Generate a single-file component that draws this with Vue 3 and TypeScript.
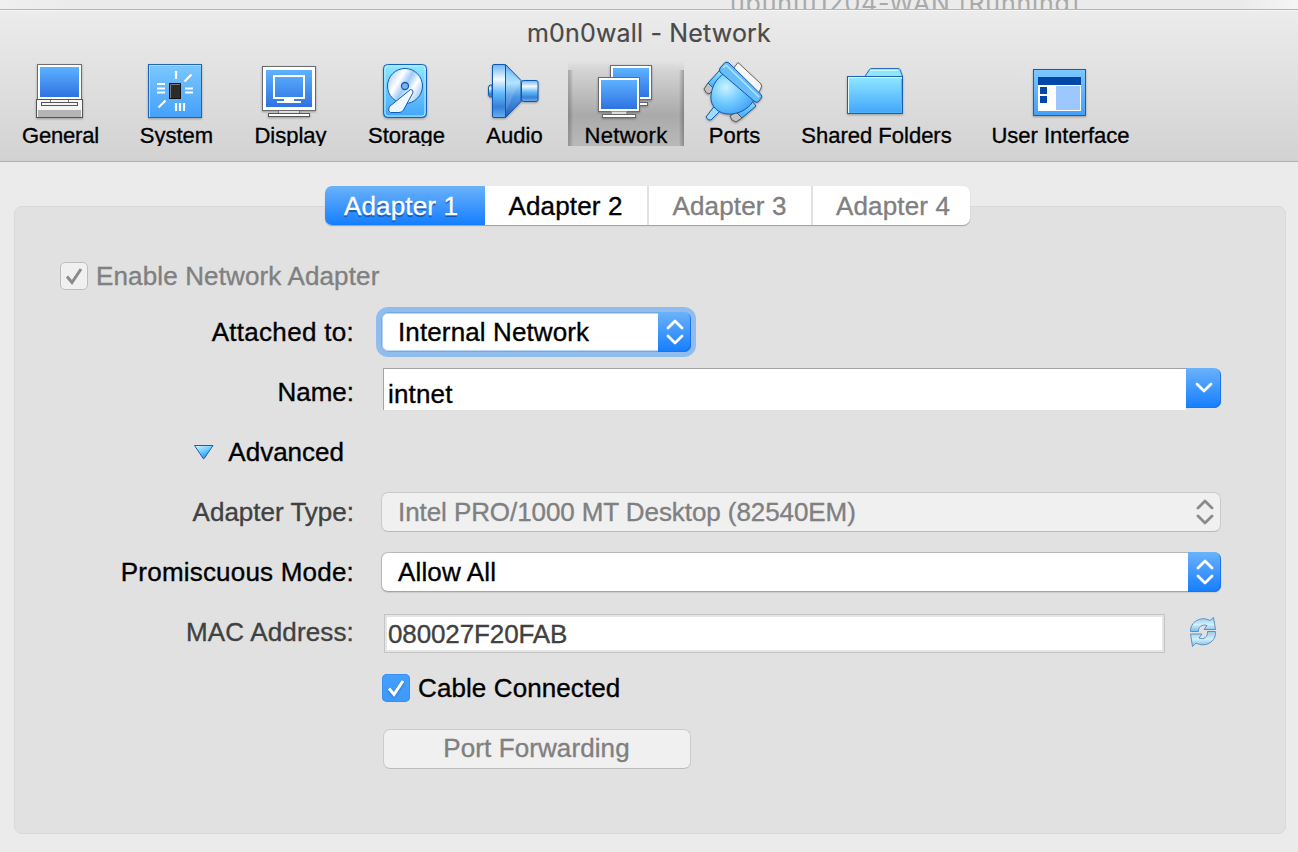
<script setup lang="ts">
import { ref } from 'vue'

interface Tool {
  id: string
  label: string
}

interface AdapterTab {
  label: string
  enabled: boolean
}

const tools: Tool[] = [
  { id: 'general', label: 'General' },
  { id: 'system', label: 'System' },
  { id: 'display', label: 'Display' },
  { id: 'storage', label: 'Storage' },
  { id: 'audio', label: 'Audio' },
  { id: 'network', label: 'Network' },
  { id: 'ports', label: 'Ports' },
  { id: 'shared', label: 'Shared Folders' },
  { id: 'ui', label: 'User Interface' },
]

const tabs: AdapterTab[] = [
  { label: 'Adapter 1', enabled: true },
  { label: 'Adapter 2', enabled: true },
  { label: 'Adapter 3', enabled: false },
  { label: 'Adapter 4', enabled: false },
]

const activeTool = ref('network')
const activeTab = ref(0)
</script>

<template>
  <div class="window">
    <div class="backdrop"><span class="behind">ubuntu1204-WAN [Running]</span></div>

    <header class="header">
      <h1 class="title">m0n0wall - Network</h1>
      <nav class="toolbar">
        <div
          v-for="tool in tools"
          :key="tool.id"
          class="tool"
          :class="[tool.id, { selected: tool.id === activeTool }]"
          @click="activeTool = tool.id"
        >
          <svg class="icon" width="64" height="64" viewBox="0 0 64 64">
            <defs>
              <linearGradient :id="tool.id + '-screen'" x1="0" y1="0" x2="0" y2="1">
                <stop offset="0" stop-color="#5db2ff" />
                <stop offset="1" stop-color="#2f72e2" />
              </linearGradient>
              <linearGradient :id="tool.id + '-tile'" x1="0" y1="0" x2="0" y2="1">
                <stop offset="0" stop-color="#7cc8ff" />
                <stop offset="1" stop-color="#43a0fb" />
              </linearGradient>
              <linearGradient :id="tool.id + '-cyan'" x1="0" y1="0" x2="0" y2="1">
                <stop offset="0" stop-color="#90e8ff" />
                <stop offset="1" stop-color="#41a5fb" />
              </linearGradient>
              <linearGradient :id="tool.id + '-metal'" x1="0" y1="0" x2="0" y2="1">
                <stop offset="0" stop-color="#6db4f4" />
                <stop offset="0.28" stop-color="#f0faff" />
                <stop offset="0.55" stop-color="#62b8fa" />
                <stop offset="0.8" stop-color="#3580da" />
                <stop offset="1" stop-color="#67aef0" />
              </linearGradient>
              <linearGradient :id="tool.id + '-cone'" x1="0" y1="0" x2="0" y2="1">
                <stop offset="0" stop-color="#5bb0f8" />
                <stop offset="0.35" stop-color="#a9e0ff" />
                <stop offset="0.6" stop-color="#4a98e6" />
                <stop offset="1" stop-color="#265fb6" />
              </linearGradient>
              <radialGradient :id="tool.id + '-ball'" cx="0.35" cy="0.35" r="0.75">
                <stop offset="0" stop-color="#c9f3ff" />
                <stop offset="0.5" stop-color="#72cbff" />
                <stop offset="1" stop-color="#3f9df6" />
              </radialGradient>
              <linearGradient :id="tool.id + '-disc'" x1="0" y1="0.2" x2="1" y2="0.8">
                <stop offset="0" stop-color="#a9cdf5" />
                <stop offset="0.3" stop-color="#ffffff" />
                <stop offset="0.5" stop-color="#9fcaf8" />
                <stop offset="0.7" stop-color="#ffffff" />
                <stop offset="1" stop-color="#8fbcf0" />
              </linearGradient>
            </defs>

            <g v-if="tool.id === 'general'">
              <rect x="9.5" y="4.5" width="44" height="35" fill="#fff" stroke="#6e6e6e" />
              <rect x="12" y="7" width="39" height="30" :fill="`url(#${tool.id}-screen)`" />
              <rect x="8.5" y="39.5" width="46" height="18" fill="#f5f5f5" stroke="#555" />
              <rect x="10" y="50" width="43" height="7" fill="#b4b4b4" />
              <path d="M22.5 40v2.5M40.5 40v2.5" stroke="#777" />
              <rect x="13.5" y="42.5" width="36" height="3" fill="#f4f4f4" stroke="#555" />
            </g>

            <g v-else-if="tool.id === 'system'">
              <rect x="5.5" y="4.5" width="53" height="53" :fill="`url(#${tool.id}-tile)`" stroke="#1d66bb" />
              <path d="M6.5 57V5.5H58" fill="none" stroke="#a8dcff" />
              <path
                d="M33 11v8M41.5 21.5l7-7M14 24h8M14 28.5h8M14 32.5h8M42 28.5h8M42 32.5h8M15.5 47.5l7-7M33 43v8M37 43v8M41 43v8"
                fill="none" stroke="#fff" stroke-width="2.2"
              />
              <rect x="26.5" y="23.5" width="11" height="15" fill="#2b2b2b" stroke="#111" />
              <path d="M27.5 38V24.5H37" fill="none" stroke="#777" />
            </g>

            <g v-else-if="tool.id === 'display'">
              <rect x="5.5" y="6.5" width="53" height="44" fill="#fff" stroke="#6b6b6b" />
              <rect x="9" y="10" width="46" height="37" :fill="`url(#${tool.id}-screen)`" />
              <rect x="17" y="16" width="30" height="22" fill="none" stroke="#fff" stroke-width="2" />
              <path d="M27 38h10v3h7v2H20v-2h7z" fill="#fff" />
              <path d="M21.5 51v3h21v-3" fill="#ddd" stroke="#777" />
              <rect x="11.5" y="53.5" width="41" height="3" fill="#fff" stroke="#555" />
            </g>

            <g v-else-if="tool.id === 'storage'">
              <rect x="10.5" y="4.5" width="43" height="53" rx="4" :fill="`url(#${tool.id}-cyan)`" stroke="#1463bd" />
              <rect x="12" y="6" width="40" height="50" rx="3" fill="none" stroke="#b9efff" />
              <circle cx="32" cy="26" r="17.5" :fill="`url(#${tool.id}-disc)`" stroke="#135cb4" />
              <circle cx="32" cy="26" r="3.5" fill="#7cb4ea" stroke="#135cb4" stroke-width="1.3" />
              <path d="M37.5 29.5Q40.5 29.5 40 32.5L30.5 50Q29 52.5 26 52.5H17.5Q14.5 51 16.5 46.5Z" fill="#edf7ff" stroke="#135cb4" />
            </g>

            <g v-else-if="tool.id === 'audio'">
              <path d="M11 25h-1.5q-2 0-2 3v6q0 3 2 3H11z" :fill="`url(#${tool.id}-metal)`" stroke="#1657a6" />
              <path d="M24.5 4.5L40 20.5V41.5L24.5 57.5z" :fill="`url(#${tool.id}-cone)`" stroke="#174f9c" />
              <path d="M24.5 10v42L39 21z" fill="#fff" opacity="0.12" />
              <rect x="11.5" y="4.5" width="13" height="53" rx="1.5" :fill="`url(#${tool.id}-metal)`" stroke="#0f56ae" />
              <rect x="40.5" y="20.5" width="16.5" height="21" rx="2" :fill="`url(#${tool.id}-metal)`" stroke="#0f56ae" />
            </g>

            <g v-else-if="tool.id === 'network'">
              <rect x="16.5" y="5.5" width="41" height="34" fill="#fff" stroke="#6b6b6b" />
              <rect x="19" y="8" width="36" height="29" :fill="`url(#${tool.id}-screen)`" />
              <rect x="40.5" y="42.5" width="13" height="3" fill="#fff" stroke="#666" />
              <rect x="4.5" y="17.5" width="41" height="34" fill="#fff" stroke="#6b6b6b" />
              <rect x="7" y="20" width="36" height="29" :fill="`url(#${tool.id}-screen)`" />
              <rect x="17.5" y="51.5" width="15" height="3.5" fill="#ddd" stroke="#999" />
              <rect x="8.5" y="54.5" width="33" height="3" fill="#fff" stroke="#666" />
            </g>

            <g v-else-if="tool.id === 'ports'" stroke-linejoin="round">
              <path d="M31 9L36 2.5L59 24Q60 26 59 28L56 34z" fill="#f7f7f7" stroke="#666" />
              <path d="M18 10L23 16L12 29L6 23z" :fill="`url(#${tool.id}-cyan)`" stroke="#1457ab" />
              <path d="M6 23L12 29L7 34Q4 34 2 29z" fill="#c2c2c2" stroke="#555" />
              <path d="M49 40L54 46L40 58L34 52z" :fill="`url(#${tool.id}-cyan)`" stroke="#1457ab" />
              <path d="M34 52L40 58L34 62Q29 61 28 56z" fill="#c2c2c2" stroke="#555" />
              <path d="M12.5 46L18 51L9 60Q6 61 4 57z" fill="#9edcff" stroke="#1457ab" />
              <path d="M23 13C14 18 8 29 9 40C11 50 20 55 30 54C40 53 48 47 52 40z" :fill="`url(#${tool.id}-ball)`" stroke="#1457ab" />
              <path d="M18 8L23 2.5Q25 1.5 27 3L59 34.5Q60.5 36.5 59 38.5L56 42Q54 43 52 41L18 12Q17 10 18 8z" fill="#68bcf7" stroke="#0f56ae" />
              <path d="M21 8L24 5L57 37" fill="none" stroke="#b2e6ff" stroke-width="1.5" />
            </g>

            <g v-else-if="tool.id === 'shared'">
              <path d="M22 16.5L26.5 9.5Q27.5 8.5 29 8.500H55Q56.500 8.500 57 9.500L59.500 16.500" fill="#8de5ff" stroke="#2272bf" />
              <path d="M27 10.500H55" stroke="#cff8ff" />
              <rect x="4.500" y="16.500" width="55" height="37" :fill="`url(#${tool.id}-cyan)`" stroke="#1b60b2" />
              <path d="M5.500 53V17.500H59" fill="none" stroke="#e0fbff" />
              <path d="M6.500 52.500H58.500V19" fill="none" stroke="#4fb2f8" />
            </g>

            <g v-else>
              <rect x="6.500" y="9.500" width="52" height="46" :fill="`url(#${tool.id}-tile)`" stroke="#175fb8" />
              <rect x="11" y="17" width="43" height="8" fill="#0147a8" />
              <rect x="11" y="25" width="43" height="26" fill="#fff" />
              <rect x="13" y="27" width="7" height="7" fill="#0147a8" />
              <rect x="13" y="36" width="7" height="7" fill="#0147a8" />
              <rect x="29" y="26" width="24" height="24" fill="#9cc8ff" />
            </g>
          </svg>
          <span class="tool-label">{{ tool.label }}</span>
        </div>
      </nav>
    </header>

    <main class="panel">
      <div class="tabs">
        <div
          v-for="(tab, i) in tabs"
          :key="tab.label"
          class="tab"
          :class="{ active: i === activeTab, disabled: !tab.enabled }"
          @click="tab.enabled && (activeTab = i)"
        >{{ tab.label }}</div>
      </div>

      <div class="enable">
        <span class="check off">
          <svg width="28" height="28" viewBox="0 0 28 28"><path d="M7 14.5L12 20.5L21 7" fill="none" stroke="#8b8b8b" stroke-width="3" /></svg>
        </span>
        <span class="enable-text">Enable Network Adapter</span>
      </div>

      <div class="form">
        <label class="label attached">Attached to:</label>
        <div class="field">
          <div class="select focused">
            <span class="value">Internal Network</span>
            <span class="stepper">
              <svg width="18" height="28" viewBox="0 0 18 28"><path d="M2 10L9 3L16 10M2 18L9 25L16 18" /></svg>
            </span>
          </div>
        </div>

        <label class="label">Name:</label>
        <div class="field">
          <div class="combo">
            <span class="combo-text">intnet</span>
            <span class="combo-arrow">
              <svg width="18" height="12" viewBox="0 0 18 12"><path d="M2 2L9 9L16 2" /></svg>
            </span>
          </div>
        </div>

        <div class="label advanced">
          <svg width="22" height="18" viewBox="0 0 22 18">
            <defs>
              <linearGradient id="tri" x1="0" y1="0" x2="0.6" y2="1">
                <stop offset="0" stop-color="#d6f7ff" />
                <stop offset="0.5" stop-color="#72cffd" />
                <stop offset="1" stop-color="#2a8be8" />
              </linearGradient>
            </defs>
            <path d="M1.5 2.5H20L11.2 15.5Q10.700 16 10.200 15.500z" fill="url(#tri)" stroke="#1961ae" stroke-linejoin="round" />
          </svg>
          <span>Advanced</span>
        </div>
        <div class="field"></div>

        <label class="label muted">Adapter Type:</label>
        <div class="field">
          <div class="select disabled">
            <span class="value intel">Intel PRO/1000 MT Desktop (82540EM)</span>
            <span class="stepper">
              <svg width="18" height="28" viewBox="0 0 18 28"><path d="M2 10L9 3L16 10M2 18L9 25L16 18" /></svg>
            </span>
          </div>
        </div>

        <label class="label promiscuous">Promiscuous Mode:</label>
        <div class="field">
          <div class="select">
            <span class="value allow">Allow All</span>
            <span class="stepper">
              <svg width="18" height="28" viewBox="0 0 18 28"><path d="M2 10L9 3L16 10M2 18L9 25L16 18" /></svg>
            </span>
          </div>
        </div>

        <label class="label muted mac-label">MAC Address:</label>
        <div class="field mac-row">
          <div class="mac">080027F20FAB</div>
          <svg class="refresh" width="30" height="32" viewBox="0 0 30 32">
            <defs>
              <linearGradient id="arrow" x1="0" y1="0" x2="0" y2="1">
                <stop offset="0" stop-color="#96c8ea" />
                <stop offset="0.5" stop-color="#d2f0f8" />
                <stop offset="1" stop-color="#76bbe8" />
              </linearGradient>
            </defs>
            <g fill="url(#arrow)" stroke="#5f8fc2" stroke-linejoin="round">
              <path d="M2.5 15.500C2 6 13 -0.500 22 4.500L25.500 1.500L27.500 13.500H16L19 9.500C14 8 10 11 10.500 15.500z" />
              <path d="M27.500 15.500C28.500 26 17 32 8 27L4.500 30.500L2.500 18H14L11 22C16 24 20 21 19.500 15.500z" />
            </g>
          </svg>
        </div>
      </div>

      <div class="cable">
        <span class="check on">
          <svg width="28" height="28" viewBox="0 0 28 28"><path d="M7 14.5L12 20.5L21 7" fill="none" stroke="#fff" stroke-width="3" /></svg>
        </span>
        <span class="cable-text">Cable Connected</span>
      </div>

      <div class="forward">Port Forwarding</div>
    </main>
  </div>
</template>

<style>
body {
  background: #ebebeb;
  overflow: hidden;
}
</style>

<style scoped>
.window {
  width: 1298px;
  height: 852px;
  overflow: hidden;
  box-sizing: border-box;
  background: #ebebeb;
  color: #000;
  font-family: "Liberation Sans", Arial, sans-serif;
  font-size: 26px;
  line-height: 30px;
  white-space: nowrap;
  -webkit-text-stroke: 0.35px currentColor;
}

.backdrop {
  height: 9px;
  overflow: hidden;
  background: linear-gradient(90deg, #f0f0f0 0, #ebebeb 70px, #ebebeb 1240px, #f5f5f5 1298px);
}

.behind {
  display: block;
  margin: -12px 0 0 730px;
  font-family: Inter, sans-serif;
  font-size: 25px;
  letter-spacing: 0.8px;
  color: #a9a9a9;
  -webkit-text-stroke: 0;
}

.header {
  height: 153px;
  box-sizing: border-box;
  border-top: 1px solid #b4b4b4;
  border-bottom: 1px solid #afafaf;
  background: linear-gradient(#ececec, #d2d2d2);
  box-shadow: inset 0 1px #f6f6f6;
}

.title {
  margin: 0;
  padding-top: 8px;
  height: 44px;
  font-family: Inter, sans-serif;
  font-size: 25px;
  font-weight: 400;
  line-height: 30px;
  letter-spacing: 0.17px;
  text-align: center;
  color: #4a4a4a;
  -webkit-text-stroke: 0.2px currentColor;
}

.toolbar {
  display: flex;
  margin-top: -2px;
  padding-left: 3px;
}

.tool {
  height: 86px;
  overflow: hidden;
  display: flex;
  flex-direction: column;
  align-items: center;
  flex: none;
}

.general { width: 114px; }
.system { width: 116px; }
.display { width: 112px; }
.storage { width: 120px; }
.audio { width: 96px; margin-right: 7px; }
.network { width: 116px; }
.ports { width: 100px; }
.shared { width: 182px; }
.ui { width: 186px; }

.tool.selected {
  background:
    linear-gradient(90deg, rgba(0, 0, 0, 0.2) 0, rgba(0, 0, 0, 0.12) 3px, transparent 5px, transparent 111px, rgba(0, 0, 0, 0.12) 113px, rgba(0, 0, 0, 0.25) 116px) 0 10px / 100% 76px no-repeat,
    linear-gradient(transparent 1px, #d4d4d4 10px, #aaa 55px, #b9b9b9 86px);
}

.icon {
  flex: none;
  filter: drop-shadow(0 1px 1px rgba(0, 0, 0, 0.3));
}

.tool-label {
  padding: 1px 0 0 3px;
  font-size: 22px;
  line-height: 21px;
  text-shadow: 0 1px rgba(255, 255, 255, 0.35);
}

.general .tool-label {
  padding-left: 1px;
  letter-spacing: -0.2px;
}

.network .tool-label {
  padding-left: 0;
  letter-spacing: 0.35px;
}

.ports .tool-label {
  padding-left: 1px;
}

.panel {
  width: 1272px;
  height: 628px;
  box-sizing: border-box;
  margin: 44px 0 0 14px;
  border: 1px solid #d9d9d9;
  border-radius: 8px;
  background: #e1e1e1;
}

.tabs {
  display: flex;
  width: 645px;
  height: 39px;
  margin: -21px 0 0 310px;
  border-radius: 7px;
  background: #fff;
  box-shadow: 0 1px 1px rgba(0, 0, 0, 0.3);
}

.tab {
  box-sizing: border-box;
  width: 164px;
  padding-right: 1px;
  line-height: 40px;
  text-align: center;
  border-right: 2px solid #e1e1e1;
  letter-spacing: 0.15px;
}

.tab:last-child {
  width: 157px;
  padding-left: 4px;
  border: 0;
}

.tab.disabled {
  color: #808080;
}

.tab.active {
  width: 160px;
  padding-right: 8px;
  border: 0;
  border-radius: 7px 0 0 7px;
  color: #fff;
  background: linear-gradient(#6bb2fa, #147eff);
  text-shadow: 0 2px 1px rgba(0, 50, 120, 0.6);
}

.enable {
  display: flex;
  align-items: center;
  height: 28px;
  margin: 37px 0 0 45px;
  gap: 8px;
  color: #808080;
  letter-spacing: 0.14px;
}

.check {
  box-sizing: border-box;
  width: 28px;
  height: 28px;
  border-radius: 5px;
  display: flex;
  align-items: center;
  justify-content: center;
}

.check svg {
  flex: none;
}

.check.off {
  border: 1px solid #bdbdbd;
  background: #f0f0f0;
}

.check.on {
  background: linear-gradient(#459ffb, #3d98fc);
  box-shadow: inset 0 0 0 1px #3990f2;
}

.check.on svg {
  filter: drop-shadow(0 1px 1px rgba(0, 60, 140, 0.5));
}

.form {
  display: grid;
  grid-template-columns: 339px 840px;
  grid-auto-rows: 60px;
  column-gap: 27px;
  margin-top: 12px;
  align-items: center;
}

.label {
  text-align: right;
}

.attached {
  letter-spacing: 0.3px;
}

.promiscuous {
  letter-spacing: 0.2px;
}

.mac-label {
  letter-spacing: 0.15px;
}

.muted {
  color: #414141;
}

.field {
  height: 40px;
}

.advanced {
  display: flex;
  align-items: center;
  gap: 13px;
  justify-content: flex-end;
  padding-right: 10px;
}

.select {
  box-sizing: border-box;
  width: 840px;
  height: 40px;
  display: flex;
  justify-content: space-between;
  border: 1px solid #b9b9b9;
  border-bottom-color: #a4a4a4;
  border-radius: 7px;
  background: #fff;
  box-shadow: 0 1px 1px rgba(0, 0, 0, 0.1);
}

.value {
  padding-left: 16px;
  line-height: 38px;
}

.allow {
  letter-spacing: 0.15px;
}

.intel {
  letter-spacing: -0.08px;
}

.stepper {
  width: 33px;
  margin: -1px;
  border-radius: 0 7px 7px 0;
  background: linear-gradient(#6bb2fa, #147eff);
  box-shadow: inset -1px -1px #1b74ed;
  display: flex;
  align-items: center;
  justify-content: center;
}

.stepper path,
.combo-arrow path {
  fill: none;
  stroke: #fff;
  stroke-width: 2.8;
  stroke-linecap: round;
  stroke-linejoin: round;
}

.select.focused {
  width: 310px;
  border-color: #78a8df;
  box-shadow: 0 0 0 5px #91bdee, inset 0 0 0 1px #bad7f5;
}

.focused .value {
  letter-spacing: 0.12px;
}

.select.disabled {
  border-color: #cacaca;
  border-bottom-color: #b9b9b9;
  background: #f0f0f0;
  box-shadow: none;
  color: #808080;
}

.disabled .stepper {
  background: none;
  box-shadow: none;
}

.disabled .stepper path {
  stroke: #8b8b8b;
}

.combo {
  display: flex;
  width: 838px;
  height: 42px;
  margin: -4px 0 0 2px;
}

.combo-text {
  box-sizing: border-box;
  width: 803px;
  height: 42px;
  padding: 10px 0 0 4px;
  border-top: 1px solid #a3a3a3;
  border-left: 1px solid #a3a3a3;
  background: #fff;
  letter-spacing: 0.15px;
}

.combo-arrow {
  width: 35px;
  height: 40px;
  border-radius: 0 7px 7px 0;
  background: linear-gradient(#6bb2fa, #147eff);
  box-shadow: inset -1px -1px #1b74ed;
  display: flex;
  align-items: center;
  justify-content: center;
}

.mac-row {
  display: flex;
  align-items: center;
  gap: 23px;
}

.mac {
  box-sizing: border-box;
  width: 781px;
  height: 39px;
  margin: 2px 0 0 3px;
  padding: 4px 0 0 3px;
  border: 1px solid #c4c4c4;
  box-shadow: inset 0 0 0 2px #e5e5e5;
  background: #fff;
  color: #414141;
  letter-spacing: -0.12px;
}

.refresh {
  flex: none;
}

.cable {
  display: flex;
  align-items: center;
  height: 28px;
  margin: 12px 0 0 367px;
  gap: 8px;
  letter-spacing: 0.1px;
}

.forward {
  box-sizing: border-box;
  width: 308px;
  height: 40px;
  margin: 27px 0 0 368px;
  padding-right: 1px;
  border: 1px solid #cbcbcb;
  border-bottom-color: #bcbcbc;
  border-radius: 7px;
  background: #f0f0f0;
  color: #808080;
  line-height: 37px;
  letter-spacing: 0.1px;
  text-align: center;
}
</style>
